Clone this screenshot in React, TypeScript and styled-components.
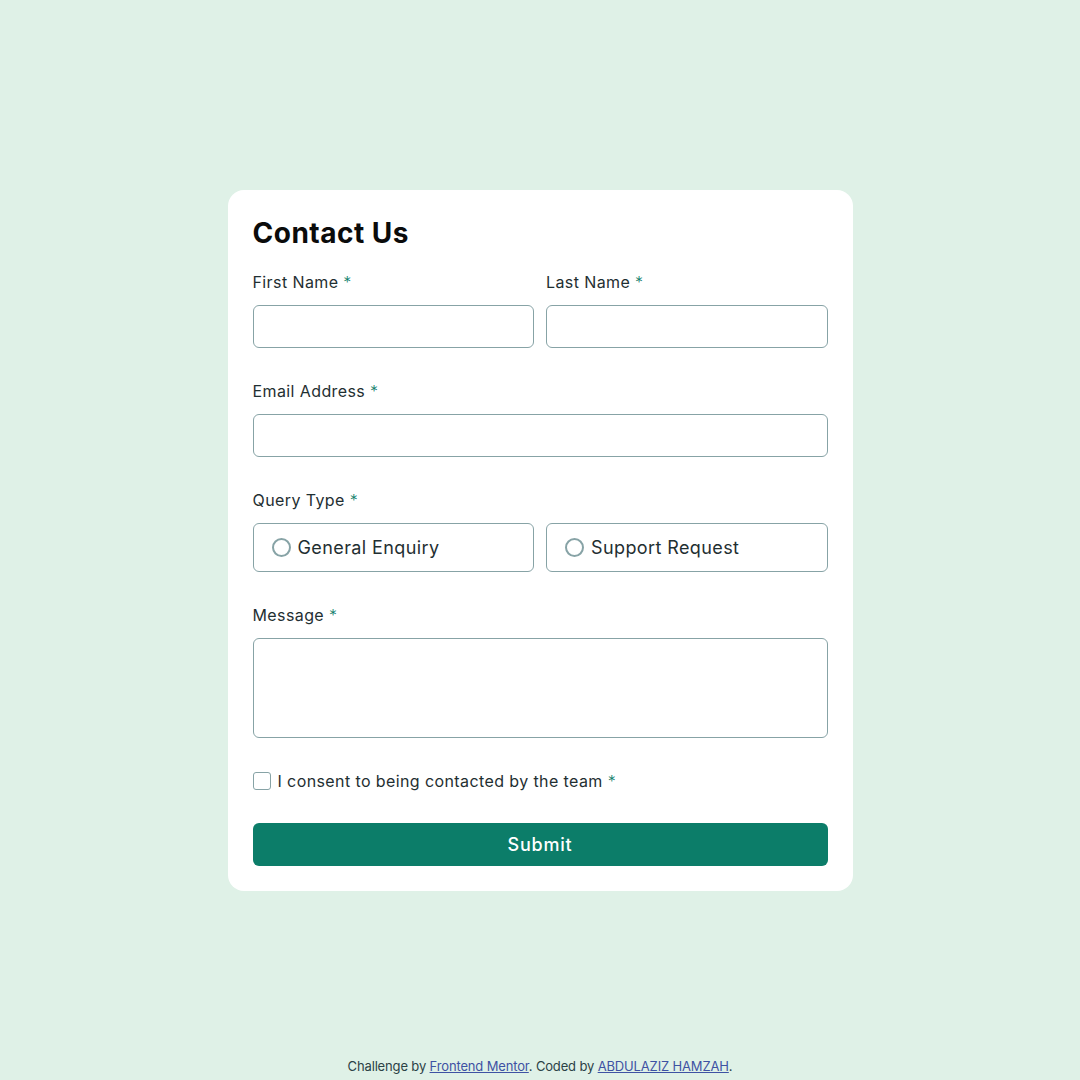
import styled, { createGlobalStyle } from "styled-components";

const GlobalStyle = createGlobalStyle`
    * { box-sizing: border-box; }
    body {
        margin: 0;
        background: #dff1e7;
        font-family: "Inter", "Liberation Sans", sans-serif;
        color: #2b4246;
    }
`;

const Page = styled.main`
    min-height: 100vh;
    display: grid;
    grid-template-rows: 1fr auto 1fr;
    justify-items: center;
`;

const Card = styled.form`
    grid-row: 2;
    width: 625px;
    background: #fff;
    border-radius: 16px;
    padding: 25px;
    display: flex;
    flex-direction: column;
    gap: 31px;
`;

const Title = styled.h1`
    margin: 0 0 -12px;
    font-size: 28px;
    line-height: 36px;
    font-weight: 700;
    color: #0b0b0b;
    letter-spacing: 0.5px;
`;

const Row = styled.div`
    display: grid;
    grid-template-columns: 1fr 1fr;
    gap: 12px;
`;

const Field = styled.div`
    display: flex;
    flex-direction: column;
    gap: 11px;
`;

const Label = styled.label`
    font-size: 16px;
    line-height: 24px;
    letter-spacing: 0.4px;
    color: #1f2f32;
    &::after {
        content: " *";
        color: #0c7d69;
        font-weight: 300;
    }
`;

const Input = styled.input`
    height: 43px;
    border: 1px solid #87a3a6;
    border-radius: 6px;
    font: inherit;
    padding: 0 16px;
    width: 100%;
`;

const TextArea = styled.textarea`
    height: 100px;
    border: 1px solid #87a3a6;
    border-radius: 6px;
    font: inherit;
    padding: 12px 16px;
    resize: none;
`;

const RadioBox = styled.label`
    height: 49px;
    border: 1px solid #87a3a6;
    border-radius: 6px;
    display: flex;
    align-items: center;
    gap: 7px;
    padding-left: 18px;
    font-size: 18px;
    letter-spacing: 0.4px;
    color: #1f2f32;
`;

const RadioDot = styled.span`
    width: 19px;
    height: 19px;
    border-radius: 50%;
    border: 2px solid #87a3a6;
`;

const Consent = styled.label`
    display: flex;
    align-items: center;
    gap: 7px;
    font-size: 16px;
    line-height: 24px;
    letter-spacing: 0.4px;
    color: #1f2f32;
    &::after {
        content: "*";
        color: #0c7d69;
        font-weight: 300;
        margin-left: -2px;
    }
`;

const Box = styled.span`
    width: 18px;
    height: 18px;
    border: 1.5px solid #87a3a6;
    border-radius: 3px;
`;

const Submit = styled.button`
    height: 43px;
    border: none;
    border-radius: 6px;
    background: #0c7d69;
    color: #fff;
    font: inherit;
    font-size: 18px;
    font-weight: 500;
    letter-spacing: 0.8px;
    margin-top: -1px;
`;

const Footer = styled.footer`
    grid-row: 3;
    align-self: end;
    font-size: 13px;
    line-height: 18px;
    letter-spacing: -0.15px;
    padding-bottom: 5px;
    color: #2b4246;
    a { color: #3e52a3; }
`;

export default function App() {
    return (
        <>
            <GlobalStyle />
            <Page>
                <Card onSubmit={(e) => e.preventDefault()}>
                    <Title>Contact Us</Title>
                    <Row>
                        <Field>
                            <Label>First Name</Label>
                            <Input type="text" />
                        </Field>
                        <Field>
                            <Label>Last Name</Label>
                            <Input type="text" />
                        </Field>
                    </Row>
                    <Field>
                        <Label>Email Address</Label>
                        <Input type="email" />
                    </Field>
                    <Field>
                        <Label>Query Type</Label>
                        <Row>
                            <RadioBox><RadioDot />General Enquiry</RadioBox>
                            <RadioBox><RadioDot />Support Request</RadioBox>
                        </Row>
                    </Field>
                    <Field>
                        <Label>Message</Label>
                        <TextArea />
                    </Field>
                    <Consent><Box />I consent to being contacted by the team</Consent>
                    <Submit type="submit">Submit</Submit>
                </Card>
                <Footer>
                    Challenge by <a href="#">Frontend Mentor</a>. Coded by <a href="#">ABDULAZIZ HAMZAH</a>.
                </Footer>
            </Page>
        </>
    );
}
